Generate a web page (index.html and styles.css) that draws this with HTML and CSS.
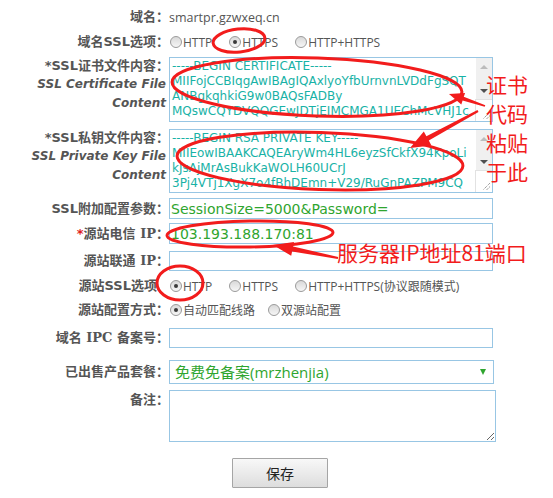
FILE: index.html
```html
<!DOCTYPE html>
<html lang="zh-CN">
<head>
    <meta charset="UTF-8">
    <meta name="viewport" content="width=device-width, initial-scale=1.0">
    <title>域名配置</title>
    <link rel="stylesheet" href="styles.css">
</head>
<body>
    <form class="form">
        <div class="row row-domain">
            <label class="lbl">域名：</label>
            <span class="val">smartpr.gzwxeq.cn</span>
        </div>

        <div class="row row-ssl">
            <label class="lbl">域名SSL选项：</label>
            <label class="opt"><input type="radio" name="ssl">HTTP</label>
            <label class="opt"><input type="radio" name="ssl" checked>HTTPS</label>
            <label class="opt"><input type="radio" name="ssl">HTTP+HTTPS</label>
        </div>

        <div class="row row-area row-cert">
            <label class="lbl">
                <span class="line">*SSL证书文件内容：</span>
                <span class="line sub">SSL Certificate File</span>
                <span class="line sub">Content</span>
            </label>
            <div class="area">
                <textarea wrap="off">-----BEGIN CERTIFICATE-----
MIIFojCCBIqgAwIBAgIQAxlyoYfbUrnvnLVDdFgSQT
ANBgkqhkiG9w0BAQsFADBy
MQswCQYDVQQGEwJDTjEIMCMGA1UEChMcVHJ1c</textarea>
                <div class="sbar">
                    <span class="btn"><i class="tri-up"></i></span>
                    <span class="track"></span>
                    <span class="btn"><i class="tri-down"></i></span>
                    <span class="corner">
                        <svg width="10" height="10" viewBox="0 0 10 10"><path d="M9 2 L2 9 M9 5.5 L5.5 9" stroke="#777" stroke-width="1" stroke-dasharray="1 1"/></svg>
                    </span>
                </div>
            </div>
        </div>

        <div class="row row-area row-key">
            <label class="lbl">
                <span class="line">*SSL私钥文件内容：</span>
                <span class="line sub">SSL Private Key File</span>
                <span class="line sub">Content</span>
            </label>
            <div class="area">
                <textarea wrap="off">-----BEGIN RSA PRIVATE KEY-----
MIIEowIBAAKCAQEAryWm4HL6eyzSfCkfX94KpoLi
kJsAjMrAsBukKaWOLH60UCrJ
3Pj4VTj1XgX7o4fBhDEmn+V29/RuGnPAZPM9CQ</textarea>
                <div class="sbar">
                    <span class="btn"><i class="tri-up"></i></span>
                    <span class="track"></span>
                    <span class="btn"><i class="tri-down"></i></span>
                    <span class="corner">
                        <svg width="10" height="10" viewBox="0 0 10 10"><path d="M9 2 L2 9 M9 5.5 L5.5 9" stroke="#777" stroke-width="1" stroke-dasharray="1 1"/></svg>
                    </span>
                </div>
            </div>
        </div>

        <div class="row row-extra">
            <label class="lbl">SSL附加配置参数：</label>
            <input class="txt" type="text" value="SessionSize=5000&amp;Password=">
        </div>

        <div class="row row-ip1">
            <label class="lbl"><span class="req">*</span>源站电信 <span class="serif">IP</span>：</label>
            <input class="txt" type="text" value="103.193.188.170:81">
        </div>

        <div class="row row-ip2">
            <label class="lbl">源站联通 <span class="serif">IP</span>：</label>
            <input class="txt" type="text" value="">
        </div>

        <div class="row row-origin-ssl">
            <label class="lbl lbl-nocolon">源站SSL选项</label>
            <label class="opt"><input type="radio" name="ossl" checked>HTTP</label>
            <label class="opt"><input type="radio" name="ossl">HTTPS</label>
            <label class="opt opt-wide"><input type="radio" name="ossl">HTTP+HTTPS(协议跟随模式)</label>
        </div>

        <div class="row row-mode">
            <label class="lbl">源站配置方式：</label>
            <label class="opt opt-tight"><input type="radio" name="mode" checked>自动匹配线路</label>
            <label class="opt"><input type="radio" name="mode">双源站配置</label>
        </div>

        <div class="row row-icp">
            <label class="lbl">域名 <span class="serif">IPC</span> 备案号：</label>
            <input class="txt" type="text" value="">
        </div>

        <div class="row row-plan">
            <label class="lbl">已出售产品套餐：</label>
            <div class="sel">
                <select>
                    <option>免费免备案(mrzhenjia)</option>
                </select>
            </div>
        </div>

        <div class="row row-note">
            <label class="lbl">备注：</label>
            <textarea class="memo"></textarea>
        </div>

        <div class="actions">
            <button type="button" class="save">保存</button>
        </div>
    </form>

    <!-- 红色标注 -->
    <svg class="marks" width="553" height="498" viewBox="0 0 553 498">
        <g fill="none" stroke="#f21c1c" stroke-width="3">
            <ellipse cx="239" cy="40.5" rx="26" ry="11.5" transform="rotate(-6 239 40.5)"/>
            <ellipse cx="317" cy="87" rx="145" ry="29" transform="rotate(2 317 87)"/>
            <ellipse cx="320" cy="161" rx="143" ry="28.5" transform="rotate(2 320 161)"/>
            <ellipse cx="250" cy="234" rx="83" ry="13" transform="rotate(-1 250 234)"/>
            <ellipse cx="180" cy="283" rx="23" ry="17"/>
        </g>
        <g fill="#f21c1c">
            <polygon points="485.3,105.2 463.8,96.8 465.1,93.0 449,94 461.3,104.4 462.6,100.6 484.7,106.8"/>
            <polygon points="477.5,110.1 426.4,136.2 423.8,131.4 410,148 431.4,145.4 428.8,140.6 478.5,111.9"/>
            <polygon points="338.2,257.0 293.1,246.4 294.0,242.0 273,245 291.2,255.8 292.1,251.4 337.8,259.0"/>
        </g>
    </svg>
    <div class="note note-cert">证书<br>代码<br>粘贴<br>于此</div>
    <div class="note note-ip">服务器IP地址81端口</div>
</body>
</html>
```

FILE: styles.css
```css
body {
    margin: 0;
    position: relative;
    background: #fff;
    color: #555;
    font-family: "Open Sans", "Noto Sans CJK SC", sans-serif;
}

.form {
    margin: 0;
    padding: 7px 0 0 8px;
}

.row {
    display: flex;
    align-items: center;
    height: 20px;
}

.lbl {
    width: 161px;
    flex: none;
    text-align: right;
    font: bold 13px/20px "DejaVu Sans", "Noto Sans CJK SC", sans-serif;
    color: #555;
}

.lbl-nocolon {
    width: 149px;
    padding-right: 12px;
}

.lbl .serif {
    font-family: "DejaVu Serif", "Noto Sans CJK SC", serif;
}

.lbl .req {
    color: #e02020;
}

.val {
    font-size: 12.5px;
    color: #555;
}

/* 单选项 */
.opt {
    display: flex;
    align-items: center;
    font-size: 12px;
    color: #555;
    margin-right: 16px;
}

.opt-wide input {
    margin-right: 5px;
}

.opt-tight {
    margin-right: 12px;
}

.opt input {
    appearance: none;
    -webkit-appearance: none;
    width: 12px;
    height: 12px;
    margin: 0 1px 0 1px;
    border: 1px solid #9a9a9a;
    border-radius: 50%;
    background: linear-gradient(#d9d9d9, #f6f6f6);
    box-sizing: border-box;
    display: flex;
    align-items: center;
    justify-content: center;
}

.opt input:checked::before {
    content: "";
    width: 4px;
    height: 4px;
    border-radius: 50%;
    background: #3a3a3a;
}

.row-ssl {
    margin-top: 5px;
}

/* 证书文本框 */
.row-area {
    align-items: flex-start;
    height: auto;
}

.row-area .lbl {
    line-height: 19px;
    margin-top: -1px;
}

.row-area .line {
    display: block;
}

.row-area .sub {
    font-size: 12px;
    font-style: italic;
    padding-right: 3px;
}

.row-cert {
    margin-top: 5px;
}

.row-key {
    margin-top: 7px;
}

.area {
    width: 324px;
    height: 65px;
    box-sizing: border-box;
    border: 1px solid #98c6e4;
    display: flex;
}

.row-key .area {
    height: 64px;
}

.area textarea {
    flex: 1;
    width: 0;
    margin: 0;
    border: 0;
    padding: 1px 2px;
    resize: none;
    overflow: hidden;
    white-space: pre;
    outline: none;
    font: 12px/15px "DejaVu Sans", sans-serif;
    color: #19b2a6;
    background: #fff;
}

.sbar {
    width: 16px;
    display: flex;
    flex-direction: column;
    background: #f0f0f0;
}

.sbar .btn {
    height: 17px;
    display: flex;
    align-items: center;
    justify-content: center;
}

.sbar .track {
    flex: 1;
}

.tri-up {
    border-left: 4px solid transparent;
    border-right: 4px solid transparent;
    border-bottom: 4px solid #bcbcbc;
}

.tri-down {
    border-left: 4px solid transparent;
    border-right: 4px solid transparent;
    border-top: 4px solid #505050;
}

.sbar .corner {
    height: 20px;
    margin-left: -1px;
    background: #fff;
    border-top: 1px solid #e2e2e2;
    border-left: 1px solid #e2e2e2;
    display: flex;
    align-items: flex-end;
    justify-content: flex-end;
    padding: 0 1px 1px 0;
}

/* 输入框 */
.txt {
    width: 324px;
    height: 21px;
    box-sizing: border-box;
    margin: 0;
    border: 1px solid #98c6e4;
    padding: 0 1px;
    font: 14px "DejaVu Sans", sans-serif;
    color: #2fa52f;
    outline: none;
}

.row-extra {
    margin-top: 5px;
    height: 21px;
}

.row-ip1 {
    margin-top: 4px;
    height: 21px;
}

.row-ip2 {
    margin-top: 7px;
}

.row-ip2 .txt,
.row-icp .txt {
    height: 20px;
}

.row-origin-ssl {
    margin-top: 5px;
}

.row-mode {
    margin-top: 4px;
}

.row-icp {
    margin-top: 8px;
}

.row-plan {
    margin-top: 12px;
    height: 24px;
}

.sel {
    position: relative;
    width: 325px;
    height: 24px;
}

.sel select {
    appearance: none;
    -webkit-appearance: none;
    width: 100%;
    height: 100%;
    margin: 0;
    border: 1px solid #98c6e4;
    border-radius: 0;
    background: #fff;
    padding: 0 5px;
    font: 15px "Open Sans", "Noto Sans CJK SC", sans-serif;
    color: #2fa52f;
    outline: none;
}

.sel::after {
    content: "";
    position: absolute;
    right: 8px;
    top: 9px;
    border-left: 3px solid transparent;
    border-right: 3px solid transparent;
    border-top: 6px solid #2fa52f;
}

.row-note {
    margin-top: 6px;
    height: auto;
    align-items: flex-start;
}

.memo {
    width: 327px;
    height: 52px;
    box-sizing: border-box;
    margin: 0;
    border: 1px solid #98c6e4;
    outline: none;
}

.actions {
    margin-top: 16px;
    padding-left: 224px;
}

.save {
    width: 96px;
    height: 30px;
    margin: 0;
    border: 1px solid #a5a5a5;
    border-radius: 1px;
    background: linear-gradient(#f8f8f8, #dddddd);
    font: 14px "Noto Sans CJK SC", sans-serif;
    color: #222;
}

/* 标注 */
.marks {
    position: absolute;
    left: 0;
    top: 0;
    pointer-events: none;
}

.note {
    position: absolute;
    color: #f21c1c;
    font: 21px/29px "Noto Sans CJK SC", sans-serif;
}

.note-cert {
    left: 486px;
    top: 70px;
}

.note-ip {
    left: 337px;
    top: 238px;
}
```
